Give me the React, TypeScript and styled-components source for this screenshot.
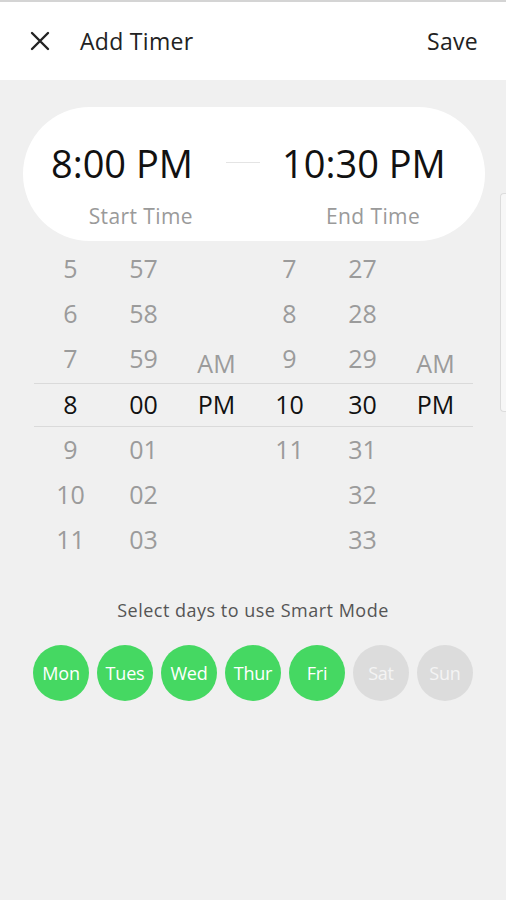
import React from "react";
import styled, { createGlobalStyle } from "styled-components";

const GlobalStyle = createGlobalStyle`
  html, body {
    margin: 0;
    padding: 0;
    background: #f0f0f0;
    font-family: "Open Sans", Roboto, sans-serif;
  }
`;

const Screen = styled.div`
  position: relative;
  width: 506px;
  min-height: 900px;
  background: #f0f0f0;
  overflow: hidden;
`;

const Header = styled.header`
  display: flex;
  align-items: center;
  height: 78px;
  padding: 0 28px 0 28px;
  background: #fff;
  border-top: 2px solid #d4d4d4;
`;

const CloseButton = styled.button`
  display: flex;
  align-items: center;
  justify-content: center;
  width: 24px;
  height: 24px;
  padding: 0;
  margin-right: 28px;
  border: none;
  background: none;
  color: #222;
`;

const Title = styled.h1`
  flex: 1;
  margin: 0;
  font-size: 23px;
  line-height: 28px;
  font-weight: 400;
  letter-spacing: 0.3px;
  color: #222;
`;

const SaveButton = styled.button`
  padding: 0;
  border: none;
  background: none;
  font-family: inherit;
  font-size: 23px;
  line-height: 28px;
  letter-spacing: 0.3px;
  color: #222;
`;

const TimePill = styled.div`
  display: grid;
  grid-template-columns: 203px 34px 1fr;
  align-items: start;
  height: 134px;
  margin: 27px 21px 0 23px;
  border-radius: 67px;
  background: #fff;
`;

const TimeBlock = styled.div<{ $side: "start" | "end" }>`
  display: flex;
  flex-direction: column;
  align-items: ${(p) => (p.$side === "start" ? "flex-end" : "flex-start")};
  padding: ${(p) => (p.$side === "start" ? "34px 33px 0 0" : "34px 0 0 22px")};
`;

const TimeValue = styled.div`
  font-size: 38px;
  line-height: 44px;
  color: #111;
`;

const TimeLabel = styled.div<{ $shift: number }>`
  margin-top: 18px;
  margin-left: ${(p) => p.$shift}px;
  font-size: 21px;
  line-height: 26px;
  letter-spacing: 0.4px;
  color: #9a9a9a;
`;

const Dash = styled.div`
  height: 1px;
  margin-top: 55px;
  background: #e4e4e4;
`;

const Picker = styled.div`
  margin: 5px 33px 0 34px;
`;

const PickerRow = styled.div<{ $selected: boolean }>`
  display: grid;
  grid-template-columns: repeat(6, 73px);
  height: ${(p) => (p.$selected ? 42 : 45)}px;
  margin-top: ${(p) => (p.$selected ? 2 : 0)}px;
  align-items: center;
  border-top: ${(p) => (p.$selected ? "1px solid #dadada" : "none")};
  border-bottom: ${(p) => (p.$selected ? "1px solid #dadada" : "none")};
  color: ${(p) => (p.$selected ? "#111" : "#9b9b9b")};
`;

const Cell = styled.div<{ $drop?: boolean }>`
  text-align: center;
  font-size: 25px;
  line-height: 32px;
  transform: translateY(${(p) => (p.$drop ? 4 : -1)}px);
`;

const DaysTitle = styled.div`
  margin-top: 37px;
  text-align: center;
  font-size: 18px;
  line-height: 22px;
  letter-spacing: 0.5px;
  color: #555;
`;

const DayRow = styled.div`
  display: flex;
  justify-content: center;
  gap: 8px;
  margin-top: 24px;
`;

const DayCircle = styled.div<{ $active: boolean }>`
  display: flex;
  align-items: center;
  justify-content: center;
  width: 56px;
  height: 56px;
  border-radius: 50%;
  background: ${(p) => (p.$active ? "#45d862" : "#dcdcdc")};
  color: ${(p) => (p.$active ? "#fff" : "#f4f4f4")};
  font-size: 18px;
  letter-spacing: -0.2px;
`;

const EdgeHandle = styled.div`
  position: absolute;
  top: 193px;
  right: 0;
  width: 5px;
  height: 217px;
  border: 1px solid #dcdcdc;
  border-right: none;
  border-radius: 4px 0 0 4px;
  background: #f7f7f7;
`;

const columns: string[][] = [
  ["5", "6", "7", "8", "9", "10", "11"],
  ["57", "58", "59", "00", "01", "02", "03"],
  ["", "", "AM", "PM", "", "", ""],
  ["7", "8", "9", "10", "11", "", ""],
  ["27", "28", "29", "30", "31", "32", "33"],
  ["", "", "AM", "PM", "", "", ""],
];

const days = [
  { name: "Mon", on: true },
  { name: "Tues", on: true },
  { name: "Wed", on: true },
  { name: "Thur", on: true },
  { name: "Fri", on: true },
  { name: "Sat", on: false },
  { name: "Sun", on: false },
];

export default function App() {
  return (
    <Screen>
      <GlobalStyle />
      <Header>
        <CloseButton aria-label="Close">
          <svg width="20" height="20" viewBox="0 0 20 20">
            <path
              d="M2 2 L18 18 M18 2 L2 18"
              stroke="#222"
              strokeWidth="2.4"
              strokeLinecap="round"
            />
          </svg>
        </CloseButton>
        <Title>Add Timer</Title>
        <SaveButton>Save</SaveButton>
      </Header>

      <TimePill>
        <TimeBlock $side="start">
          <TimeValue>8:00 PM</TimeValue>
          <TimeLabel $shift={0}>Start Time</TimeLabel>
        </TimeBlock>
        <Dash />
        <TimeBlock $side="end">
          <TimeValue>10:30 PM</TimeValue>
          <TimeLabel $shift={44}>End Time</TimeLabel>
        </TimeBlock>
      </TimePill>

      <Picker>
        {columns[0].map((_, row) => (
          <PickerRow key={row} $selected={row === 3}>
            {columns.map((col, c) => (
              <Cell key={c} $drop={col[row] === "AM"}>
                {col[row]}
              </Cell>
            ))}
          </PickerRow>
        ))}
      </Picker>

      <DaysTitle>Select days to use Smart Mode</DaysTitle>
      <DayRow>
        {days.map((d) => (
          <DayCircle key={d.name} $active={d.on}>
            {d.name}
          </DayCircle>
        ))}
      </DayRow>

      <EdgeHandle />
    </Screen>
  );
}
